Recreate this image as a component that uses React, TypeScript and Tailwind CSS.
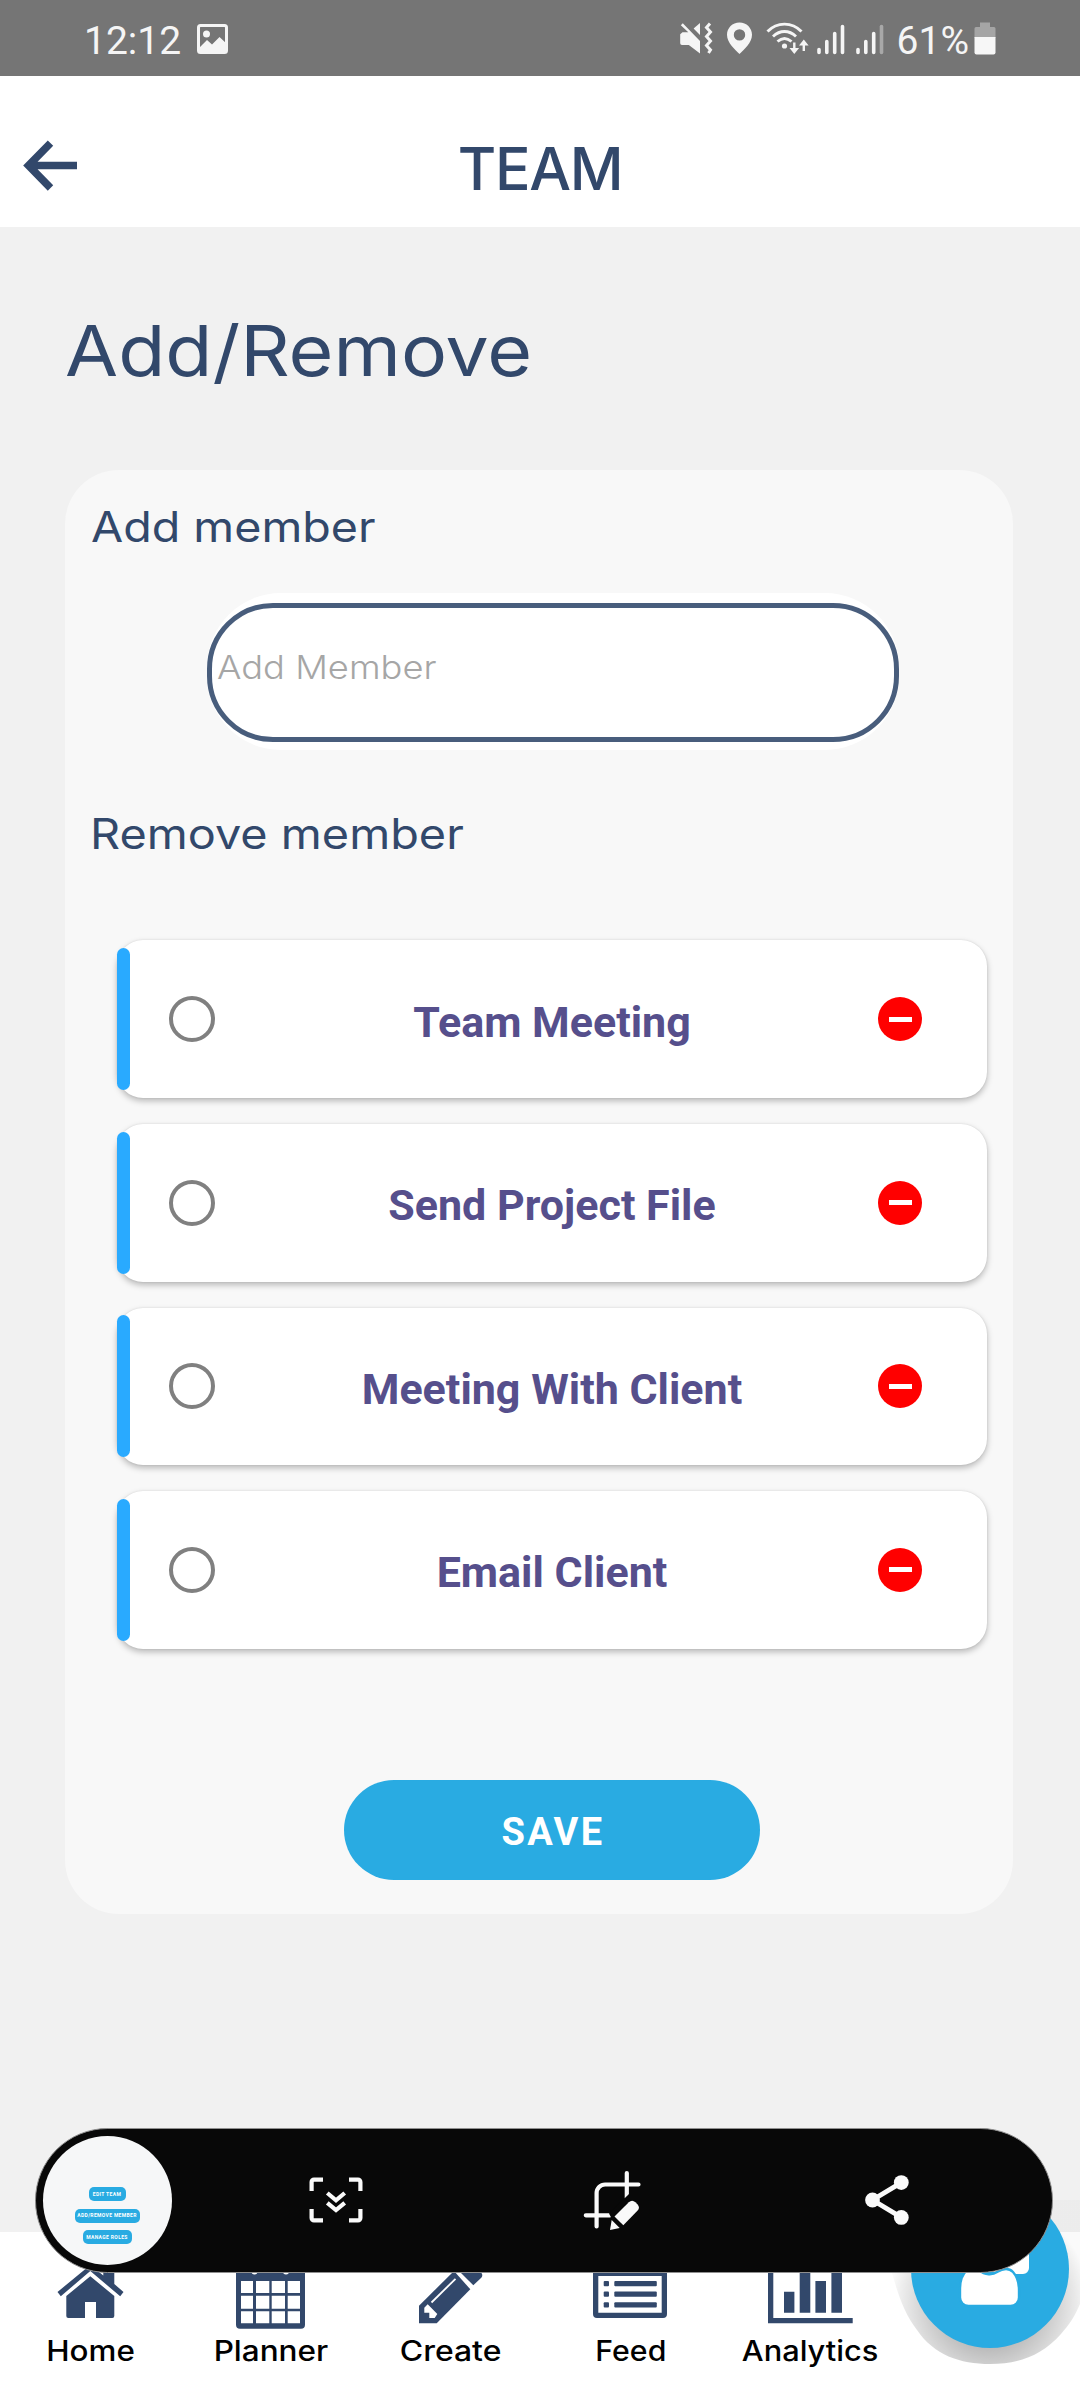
import type { ReactNode } from "react";

const NAVY = "#32486b";

function StatusBar() {
  return (
    <div className="flex h-[76px] items-center bg-[#757575] pl-[84px] pr-[84px] font-['Roboto',sans-serif] text-[39px] leading-none text-[#f5f5f5]">
      <span className="pt-[6px]">12:12</span>
      <svg className="ml-[15px]" width="32" height="34" viewBox="0 0 32 34">
        <rect x="2.500" y="4.500" width="28" height="27" rx="2" fill="none" stroke="#f5f5f5" strokeWidth="3" />
        <circle cx="10.500" cy="13" r="3.500" fill="#f5f5f5" />
        <path d="M2 28l9-9 5 4.500L23.500 16l7.500 7v9H2z" fill="#f5f5f5" />
      </svg>
      <div className="ml-auto flex items-center">
        <svg width="34" height="34" viewBox="0 0 34 34" fill="#f5f5f5">
          <path d="M3.500 11.300h5.800L1.800 4.200 3.800 2.200 21 20v12.500L9.800 24H3a1.800 1.800 0 0 1-1.800-1.800v-9z" />
          <path d="M14.600 7.600L21 2v12z" />
          <path d="M31 2.500l-3.500 4 4 4.500-4 4.500 4 4.500-4 4.500 4 4.500-2 3" fill="none" stroke="#f5f5f5" strokeWidth="3" />
        </svg>
        <svg className="ml-[13px]" width="27" height="34" viewBox="0 0 27 34">
          <path fillRule="evenodd" fill="#f5f5f5" d="M13.500 1.500C6.400 1.500 1 7 1 13.800 1 22 9 28.500 13.500 33 18 28.500 26 22 26 13.800 26 7 20.600 1.500 13.500 1.500zm0 6.700a5.700 5.700 0 1 1 0 11.400 5.700 5.700 0 0 1 0-11.400z" />
        </svg>
        <svg className="ml-[13px]" width="43" height="34" viewBox="0 0 43 34" fill="none" stroke="#f5f5f5" strokeWidth="2.900">
          <path d="M1.500 10.500C11 .6 26 .6 35.500 10.500" />
          <path d="M7 15.500c7-6.600 16-6.600 23 0" />
          <path d="M11.500 20.500c4.500-4 9.500-4 14 0" />
          <circle cx="18.500" cy="25" r="2.600" fill="#f5f5f5" stroke="none" />
          <path d="M28.300 21.500v9M37.800 30v-9" strokeWidth="2.400" />
          <path d="M23.500 27h9.600l-4.800 6zM33 24.500h9.600l-4.800-6z" fill="#f5f5f5" stroke="none" />
        </svg>
        <svg className="ml-[8px]" width="28" height="34" viewBox="0 0 28 34" stroke="#f5f5f5" strokeWidth="3.600" strokeLinecap="round">
          <path d="M2 28.500v3M9.800 20.500v11M17.700 12.500v19M25.500 5.500v26" />
        </svg>
        <svg className="ml-[11px]" width="28" height="34" viewBox="0 0 28 34" stroke="#f5f5f5" strokeWidth="3.600" strokeLinecap="round">
          <path d="M2 28.500v3M9.800 20.500v11M17.700 12.500v19" />
          <path d="M25.500 5.500v26" stroke="#a8a8a8" />
        </svg>
        <span className="ml-[13px] pt-[6px]">61%</span>
        <svg className="ml-[5px]" width="22" height="34" viewBox="0 0 22 34">
          <path d="M6 1.500h10V6h4a1.500 1.500 0 0 1 1.500 1.500V17H.5V7.500A1.500 1.500 0 0 1 2 6h4z" fill="#a5a5a5" />
          <path d="M.5 16h21v15.500A2 2 0 0 1 19.500 33.500h-17A2 2 0 0 1 .5 31.500z" fill="#f7f7f7" />
        </svg>
      </div>
    </div>
  );
}

function Header() {
  return (
    <header className="relative flex h-[151px] items-start justify-center bg-white">
      <button className="absolute left-[22px] top-[62px]" aria-label="Back">
        <svg width="58" height="54" viewBox="0 0 58 54" fill="none" stroke={NAVY} strokeWidth="7.600">
          <path d="M28.500 5.200L6.500 27.500l22 22.500M7 27.500h48" />
        </svg>
      </button>
      <h1 className="mt-[63px] text-[59px] font-medium leading-[60px] tracking-[-1.300px] text-[#32486b]">TEAM</h1>
    </header>
  );
}

const members = ["Team Meeting", "Send Project File", "Meeting With Client", "Email Client"];

function MemberRow({ name }: { name: string }) {
  return (
    <li className="flex h-[157.600px] items-center rounded-[26px] bg-white pr-[65px] shadow-[0_3px_6px_rgba(0,0,0,0.26),0_0_2px_rgba(0,0,0,0.1)]">
      <span className="h-[142px] w-[13px] rounded-full bg-[#29aaff]" />
      <span className="ml-[38.500px] size-[46px] rounded-full border-4 border-[#808080]" />
      <span className="flex-1 pl-[11.500px] pt-[5px] text-center font-['Roboto',sans-serif] text-[43px] font-bold leading-[50px] text-[#564f8c]">
        {name}
      </span>
      <span className="flex size-[44px] items-center justify-center rounded-full bg-[#ff0000]">
        <span className="h-[5px] w-[23px] bg-white" />
      </span>
    </li>
  );
}

function NavItem({ label, stretch, children }: { label: string; stretch: string; children: ReactNode }) {
  return (
    <a className="flex w-[180px] flex-col items-center">
      <svg width="180" height="98" viewBox="0 0 180 98" fill={NAVY}>
        {children}
      </svg>
      <span className={"ml-[1px] mt-[1px] origin-center text-[28px] font-[450] leading-[40px] text-black " + stretch}>{label}</span>
    </a>
  );
}

function BottomNav() {
  return (
    <nav className="flex h-[168px] bg-white">
      <NavItem label="Home" stretch="scale-x-[1.120]">
        <path d="M57.500 60L90.300 33l13 10.500V38h11v14l9.200 8-3.300 4.300-29.900-25.300L60.800 64.300z" />
        <path d="M90.300 44.300l24 19.700v20a2 2 0 0 1-2 2H96V70H85v16H68.300a2 2 0 0 1-2-2V64z" />
      </NavItem>
      <NavItem label="Planner" stretch="scale-x-[1.125]">
        <path fillRule="evenodd" d="M56 34h69v58.700a4 4 0 0 1-4 4H60a4 4 0 0 1-4-4zM61 49v12h12V49zm15 0v12h13.300V49zm15.700 0v12H105V49zm16 0v12H120V49zM61 63.700v13h12v-13zm15 0v13h13.300v-13zm15.700 0v13H105v-13zm16 0v13H120v-13zM61 79.300v12h12v-12zm15 0v12h13.300v-12zm15.700 0v12H105v-12zm16 0v12H120v-12z" />
        <circle cx="74.500" cy="39.500" r="3" fill="#fff" />
        <circle cx="106" cy="39.500" r="3" fill="#fff" />
      </NavItem>
      <NavItem label="Create" stretch="scale-x-[1.140]">
        <path d="M59 73.700L94 39l16.300 18.300L76.700 91.300H59z" />
        <path d="M100 40l13.300 13.300 8-7.500a4 4 0 0 0 0-5L114 34h-8z" />
        <path d="M67.700 72.300l9.600 9.700-2.600 4H69.300v-5.300h-5v-5z" fill="#fff" />
        <path d="M71.500 70.500l24-23.700" stroke="#fff" strokeWidth="1.800" />
      </NavItem>
      <NavItem label="Feed" stretch="scale-x-[1.080]">
        <path fillRule="evenodd" d="M53 36h74v46a4 4 0 0 1-4 4H57a4 4 0 0 1-4-4zM58.300 44v36.700h63.400V44z" />
        {[49, 59.6, 70.2].map((y) => (
          <g key={y}>
            <rect x="63.700" y={y} width="5.300" height="5.200" rx="1" />
            <rect x="74.300" y={y} width="42.500" height="5.200" rx="1" />
          </g>
        ))}
      </NavItem>
      <NavItem label="Analytics" stretch="scale-x-[1.100]">
        <path d="M48 34h5.300v52h79.400v5.300H48zM64 59.700h10.400v21H64zM79.700 34h10.600v46.700H79.700zM95.400 49H106v31.700H95.400zM111.400 34H122v46.700h-10.600z" />
      </NavItem>
    </nav>
  );
}

function TeamFab() {
  return (
    <button className="absolute left-[880px] top-[2180px]" aria-label="Team members">
      <svg width="200" height="220" viewBox="0 0 200 220">
        <defs>
          <radialGradient id="fab-shadow" gradientUnits="userSpaceOnUse" cx="110" cy="122" r="100">
            <stop offset="0.450" stopColor="#000" stopOpacity="0.270" />
            <stop offset="0.650" stopColor="#000" stopOpacity="0.180" />
            <stop offset="1" stopColor="#000" stopOpacity="0.020" />
          </radialGradient>
        </defs>
        <path d="M6 70C14 100 20 128 37 150 54 175 80 184 110 184s52-9 71-30c8-9 14-18 19-30V20H30z" fill="url(#fab-shadow)" />
        <circle cx="110" cy="89" r="79" fill="#29abe2" />
        <path d="M74 92h40l20 2h9a6 6 0 0 0 6-6V70H100z" fill="#fff" />
        <path
          d="M80 110c0-10 2-15 7-20h12c6 5.500 14 5 18 2 6-3.500 12-4 16 0 4.500 5 6 12 6 18v7.500a8.500 8.500 0 0 1-8.500 8.500H88.500A8.500 8.500 0 0 1 80 117.500z"
          fill="#fff"
          stroke="#29abe2"
          strokeWidth="2.400"
        />
      </svg>
    </button>
  );
}

function ThumbButton({ children, width }: { children: ReactNode; width: string }) {
  return (
    <span className={"flex h-[14px] items-center justify-center rounded-[5px] bg-[#29abe2] font-['Roboto',sans-serif] text-[5px] font-bold leading-none tracking-[0.350px] text-white " + width}>
      {children}
    </span>
  );
}

function CaptureToolbar() {
  return (
    <div className="absolute left-[35px] top-[2128px] flex h-[145px] w-[1018px] items-center rounded-full border border-[#8f8f8f] bg-[#080808] pl-[6.500px]">
      <div className="flex size-[129px] flex-col items-center gap-[7.500px] rounded-full bg-[#f6f7f8] pt-[51px]">
        <ThumbButton width="w-[37px]">EDIT TEAM</ThumbButton>
        <ThumbButton width="w-[65px]">ADD/REMOVE MEMBER</ThumbButton>
        <ThumbButton width="w-[49px]">MANAGE ROLES</ThumbButton>
      </div>
      <div className="ml-[27px] grid grid-cols-[275.500px_275.500px_275.500px] place-items-center pb-[1px]">
        <svg width="54" height="46" viewBox="0 0 54 46" fill="none" stroke="#fafafa" strokeWidth="4.200">
          <path d="M14 2.600H5A2.400 2.400 0 0 0 2.600 5v9M40 2.600h9A2.400 2.400 0 0 1 51.400 5v9M14 43.400H5A2.400 2.400 0 0 1 2.600 41v-9M40 43.400h9a2.400 2.400 0 0 0 2.400-2.400v-9" />
          <path d="M18.300 16l8.700 7.300 8.700-7.300M18.300 25.800l8.700 7.300 8.700-7.300" />
        </svg>
        <svg width="58" height="62" viewBox="0 0 58 62" fill="none" stroke="#fafafa" strokeWidth="4.200" strokeLinecap="round">
          <path d="M2.800 46.300H27M13.600 57.500V24a8.500 8.500 0 0 1 8.500-8.500H55.500M43.800 4v25" />
          <path d="M26 44.500L46 25v12L30 52z" fill="#080808" stroke="none" />
          <path d="M31.500 47.500L45.800 33.200a4.800 4.800 0 0 1 6.600 0l2 2a4.800 4.800 0 0 1 0 6.600L40.300 56.200z" fill="#fafafa" stroke="none" />
          <path d="M28.700 51l8 8-9.700 2z" fill="#fafafa" stroke="none" />
        </svg>
        <svg width="44" height="50" viewBox="0 0 44 50" fill="#fafafa" stroke="#fafafa">
          <path d="M36.300 7.600L7.500 25l28.800 17.400" fill="none" strokeWidth="4.800" />
          <circle cx="7.500" cy="25" r="7.400" stroke="none" />
          <circle cx="36.300" cy="7.600" r="7.400" stroke="none" />
          <circle cx="36.300" cy="42.400" r="7.400" stroke="none" />
        </svg>
      </div>
    </div>
  );
}

export default function App() {
  return (
    <div className="relative flex h-[2400px] w-[1080px] flex-col overflow-hidden bg-[#f1f1f1] font-['Inter',sans-serif] text-[#32486b]">
      <StatusBar />
      <Header />
      <main className="flex-1 px-[65px] pt-[79px]">
        <h2 className="w-fit origin-left scale-x-[1.100] text-[70px] leading-[90px]">Add/Remove</h2>
        <section className="mt-[74px] flex h-[1444px] w-[948px] flex-col rounded-[54px] bg-[#f8f8f8] pt-[27px]">
          <h3 className="ml-[26px] w-fit origin-left scale-x-[1.110] text-[42px] leading-[60px]">Add member</h3>
          <div className="ml-[142px] mt-[36px] h-[157px] w-[692px] rounded-[74px] bg-white pt-[10px]">
            <div className="flex h-[139px] items-center rounded-[66px] border-[5px] border-[#485d7c] bg-white pb-[12px] pl-[5px]">
              <span className="origin-left scale-x-[1.100] text-[33px] font-light leading-[40px] text-[#a6a6a6]">Add Member</span>
            </div>
          </div>
          <h3 className="ml-[25px] mt-[54px] w-fit origin-left scale-x-[1.115] text-[42px] leading-[60px]">Remove member</h3>
          <ul className="ml-[52px] mt-[76.400px] flex w-[870px] flex-col gap-[26px]">
            {members.map((name) => (
              <MemberRow key={name} name={name} />
            ))}
          </ul>
          <button className="ml-[279px] mt-[131.600px] h-[100px] w-[416px] rounded-full bg-[#29abe2] pl-[2px] pt-1 font-['Roboto',sans-serif] text-[38px] font-bold tracking-[2.400px] text-white">
            SAVE
          </button>
        </section>
      </main>
      <BottomNav />
      <TeamFab />
      <CaptureToolbar />
    </div>
  );
}
